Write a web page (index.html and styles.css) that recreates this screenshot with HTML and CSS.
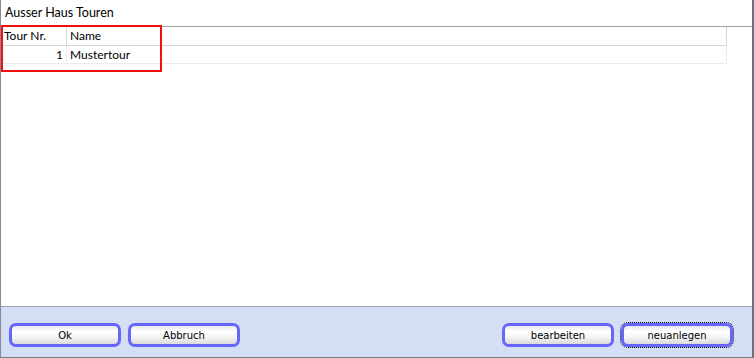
FILE: index.html
```html
<!DOCTYPE html>
<html>
<head>
<meta charset="utf-8">
<link rel="stylesheet" href="styles.css">
</head>
<body>
<div class="window">
  <div class="titlebar">Ausser Haus Touren</div>
  <div class="content">
    <div class="grid">
      <div class="row head">
        <div class="cell c1">Tour Nr.</div>
        <div class="cell c2">Name</div>
      </div>
      <div class="row data">
        <div class="cell c1 num">1</div>
        <div class="cell c2">Mustertour</div>
      </div>
    </div>
    <div class="mark"></div>
  </div>
  <div class="footer">
    <div class="group">
      <button class="btn">Ok</button>
      <button class="btn">Abbruch</button>
    </div>
    <div class="group">
      <button class="btn">bearbeiten</button>
      <button class="btn focus">neuanlegen</button>
    </div>
  </div>
</div>
</body>
</html>
```

FILE: styles.css
```css
html, body {
  margin: 0;
  padding: 0;
  background: #ffffff;
}
body {
  font-family: "Lato", "Open Sans", sans-serif;
}
.window {
  width: 754px;
  height: 358px;
  box-sizing: border-box;
  border-left: 1px solid #8a8a96;
  border-right: 2px solid #6e6e7c;
  border-bottom: 1px solid #7a7a84;
  display: flex;
  flex-direction: column;
  background: #fff;
}
.titlebar {
  height: 27px;
  box-sizing: border-box;
  border-bottom: 1px solid #a0a0a0;
  padding-left: 4px;
  font-size: 12.5px;
  line-height: 25px;
  color: #000;
}
.content {
  flex: 1;
  position: relative;
  background: #fff;
}
.grid {
  width: 726px;
  font-size: 12px;
  color: #000;
}
.row {
  display: flex;
  box-sizing: border-box;
}
.row.head {
  height: 19px;
  border-bottom: 1px solid #d6d6d6;
  border-right: 1px solid #d6d6d6;
}
.row.data {
  height: 18px;
  border-bottom: 1px solid #ececec;
  border-right: 1px solid #ececec;
}
.cell {
  line-height: 18px;
  padding: 0 3px;
  box-sizing: border-box;
  white-space: nowrap;
}
.data .cell { line-height: 17px; }
.c1 {
  width: 66px;
}
.head .c1 { border-right: 1px solid #d6d6d6; }
.data .c1 { border-right: 1px solid #ececec; }
.num { text-align: right; }
.c2 { flex: 1; }
.mark {
  position: absolute;
  left: 0;
  top: -2px;
  width: 161px;
  height: 47px;
  box-sizing: border-box;
  border: 2px solid #f01010;
}
.footer {
  height: 51px;
  box-sizing: border-box;
  border-top: 1px solid #a0a0a8;
  background: #d4def4;
  display: flex;
  justify-content: space-between;
  align-items: flex-end;
  padding: 0 19px 10px 8px;
}
.group {
  display: flex;
  gap: 7px;
}
.btn {
  width: 112px;
  height: 24px;
  box-sizing: border-box;
  border: 3px solid #6666ff;
  border-radius: 7px;
  background: linear-gradient(#e9e9e9 0%, #ffffff 30%, #f6f6f6 60%, #dadada 100%);
  font-family: "DejaVu Sans", sans-serif;
  font-size: 10px;
  color: #000;
  padding: 0;
  margin: 0;
}
.btn.focus {
  outline: 1px dotted #000;
  outline-offset: 0;
}
```
